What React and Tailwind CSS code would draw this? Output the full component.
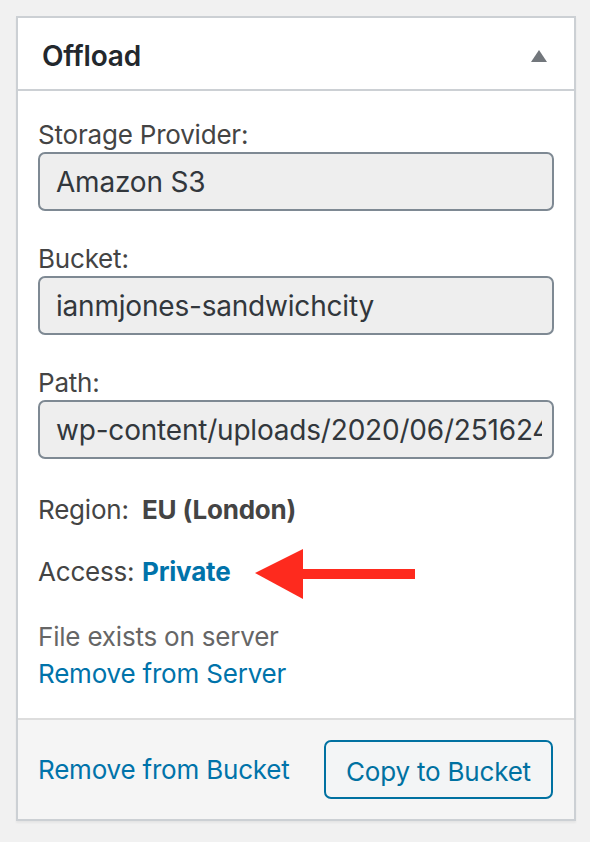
import React from "react";

const font = { fontFamily: "Inter, 'Noto Sans', sans-serif" };

function Field({ label, value }) {
  return (
    <div className="flex flex-col">
      <label className="h-[34px] text-[26px] leading-[34px] text-[#444]">{label}</label>
      <input
        readOnly
        value={value}
        className="h-[59px] w-full rounded-[7px] border-2 border-[#7e8993] bg-[#eeeeee] pl-[16px] pr-[10px] text-[28px] tracking-[-0.2px] text-[#32373c] outline-none"
      />
    </div>
  );
}

export default function App() {
  return (
    <div className="relative h-[842px] w-[590px] bg-[#f1f1f1] px-4 pt-4 tracking-[-0.2px]" style={font}>
      <div className="w-[560px] border-2 border-[#ccd0d4] bg-white shadow-[0_2px_2px_rgba(0,0,0,0.05)]">
        {/* header */}
        <div className="flex h-[73px] items-center justify-between border-b-2 border-[#ccd0d4] pl-[24px] pr-[27px] pt-[4px]">
          <h2 className="text-[28px] font-semibold text-[#23282d]">Offload</h2>
          <svg width="16" height="12" viewBox="0 0 16 12">
            <polygon points="8,0 16,12 0,12" fill="#72777c" />
          </svg>
        </div>

        {/* body */}
        <div className="flex flex-col px-5 pt-[27px] pb-[26px] text-[26px] leading-[36px] text-[#444]">
          <div className="flex flex-col gap-[31px]">
            <Field label="Storage Provider:" value="Amazon S3" />
            <Field label="Bucket:" value="ianmjones-sandwichcity" />
            <Field label="Path:" value="wp-content/uploads/2020/06/25162455-scaled.jpg" />
          </div>
          <div className="mt-[33px] flex">
            <span className="w-[104px]">Region:</span>
            <strong className="font-bold">EU (London)</strong>
          </div>
          <div className="mt-[26px] flex">
            <span className="w-[104px]">Access:</span>
            <a className="font-bold text-[#0073aa]">Private</a>
          </div>
          <div className="mt-[29px] text-[#666]">File exists on server</div>
          <a className="mt-[1px] text-[#0073aa]">Remove from Server</a>
        </div>

        {/* footer */}
        <div className="flex items-center justify-between border-t-2 border-[#dddddd] bg-[#f5f5f5] py-[20px] pl-5 pr-[21px]">
          <a className="text-[26px] leading-[36px] text-[#0073aa]">Remove from Bucket</a>
          <button className="h-[59px] w-[229px] rounded-[7px] border-2 border-[#0071a1] bg-[#f3f5f6] pt-[3px] text-[26px] text-[#0071a1]">
            Copy to Bucket
          </button>
        </div>
      </div>

      {/* annotation arrow */}
      <svg className="absolute left-[254px] top-[548px]" width="162" height="52" viewBox="0 0 162 52">
        <polygon points="1,25 49,1 49,51" fill="#fe2a1e" />
        <rect x="48" y="21" width="113" height="10" fill="#fe2a1e" />
      </svg>
    </div>
  );
}
